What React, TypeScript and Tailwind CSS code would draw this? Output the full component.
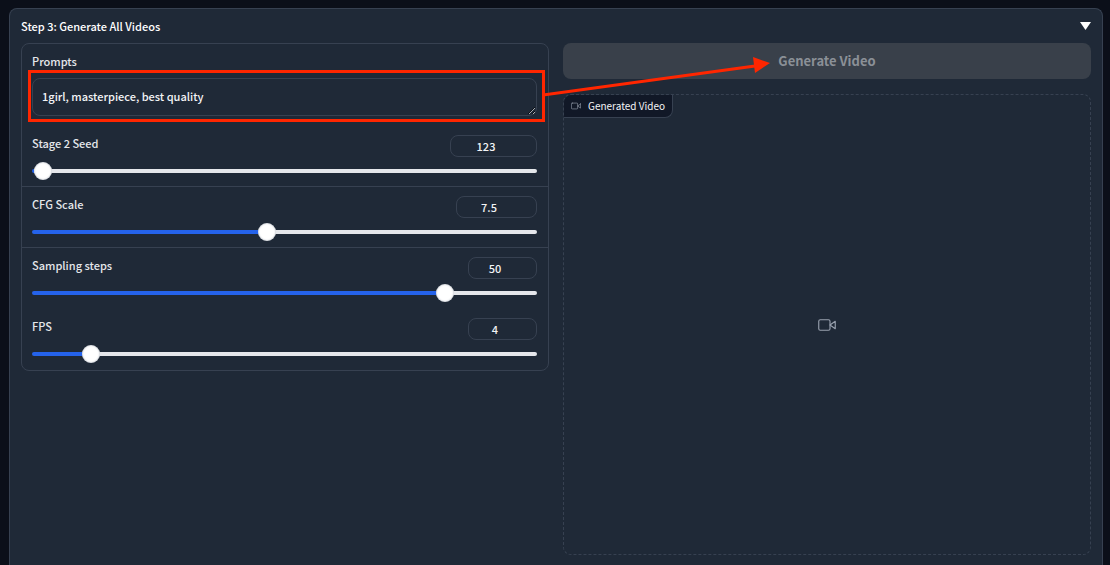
import { useState } from 'react';

type SliderFieldProps = {
  id: string;
  label: string;
  min: number;
  max: number;
  step?: number;
  initial: number;
  inputWidth: string;
  divider?: boolean;
};

function VideoIcon({ className }: { className: string }) {
  return (
    <svg
      viewBox="0 0 24 24"
      fill="none"
      stroke="currentColor"
      strokeWidth="1.5"
      strokeLinecap="round"
      strokeLinejoin="round"
      className={className}
      aria-hidden="true"
    >
      <polygon points="23 7 16 12 23 17 23 7" />
      <rect x="1" y="5" width="15" height="14" rx="2" ry="2" />
    </svg>
  );
}

function SliderField({ id, label, min, max, step = 1, initial, inputWidth, divider }: SliderFieldProps) {
  const [value, setValue] = useState(initial);
  const percent = ((value - min) / (max - min)) * 100;

  return (
    <div className={`h-[61px] pt-[9px] pr-[11px] pl-2.5 ${divider ? 'border-b border-[#374151]' : ''}`}>
      <div className="flex items-start justify-between">
        <label htmlFor={id} className="leading-4 text-gray-200">{label}</label>
        <input
          id={id}
          type="number"
          min={min}
          max={max}
          step={step}
          value={value}
          onChange={(e) => setValue(Number(e.target.value))}
          className={`h-[22px] rounded-lg border border-[#374151] bg-transparent text-center text-gray-100 outline-none ${inputWidth}`}
        />
      </div>
      <input
        type="range"
        aria-label={`${label} slider`}
        min={min}
        max={max}
        step={step}
        value={value}
        onChange={(e) => setValue(Number(e.target.value))}
        style={{ backgroundImage: `linear-gradient(to right, #2563eb ${percent}%, #e5e7eb ${percent}%)` }}
        className="mt-3 block h-1 w-full cursor-pointer appearance-none rounded-full outline-none [&::-webkit-slider-thumb]:size-[18px] [&::-webkit-slider-thumb]:appearance-none [&::-webkit-slider-thumb]:rounded-full [&::-webkit-slider-thumb]:bg-white [&::-webkit-slider-thumb]:shadow-[inset_0_0_2px_#9ca3af]"
      />
    </div>
  );
}

function PromptField() {
  const [prompt, setPrompt] = useState('1girl, masterpiece, best quality');

  return (
    <div className="pt-[9px] pr-[11px] pb-2.5 pl-2.5">
      <label htmlFor="prompt" className="block leading-4 text-gray-200">Prompts</label>
      <div className="relative mt-[9px]">
        <textarea
          id="prompt"
          rows={1}
          value={prompt}
          onChange={(e) => setPrompt(e.target.value)}
          className="block h-[38px] w-full resize-y overflow-hidden rounded-lg border border-[#374151] bg-transparent px-[9px] py-[9px] leading-4 text-gray-100 outline-none"
        />
        {/* Highlight frame and arrow pointing at the generate button */}
        <div className="pointer-events-none absolute -top-2 -right-2 -bottom-1.5 -left-1 border-3 border-[#ff2600]" />
        <svg
          viewBox="0 0 232 48"
          className="pointer-events-none absolute -top-6 left-full z-10 ml-1.5 h-12 w-[232px]"
          aria-hidden="true"
        >
          <line x1="0" y1="41" x2="212" y2="12" stroke="#ff2600" strokeWidth="3" />
          <polygon points="210,3 227,9 212,19" fill="#ff2600" />
        </svg>
      </div>
    </div>
  );
}

export default function App() {
  const [open, setOpen] = useState(true);

  return (
    <main className="flex min-h-screen bg-[#0b0f19] pt-2 pr-[7px] pl-[9px] font-['Noto_Sans_CJK_SC',sans-serif] text-[11px] font-medium">
      <section className="flex flex-1 flex-col rounded-t-lg border border-b-0 border-[#374151] bg-[#1f2937] px-[11px] pb-2.5">
        <button
          type="button"
          aria-expanded={open}
          onClick={() => setOpen(!open)}
          className="flex h-[34px] w-full items-center justify-between text-white"
        >
          <span>Step 3: Generate All Videos</span>
          <svg viewBox="0 0 11 8" className={`h-2 w-[11px] ${open ? '' : 'rotate-90'}`} fill="currentColor" aria-hidden="true">
            <polygon points="0,0 11,0 5.5,8" />
          </svg>
        </button>

        {open && (
          <div className="grid flex-1 grid-cols-2 gap-3.5">
            <div className="self-start rounded-lg border border-[#374151]">
              <PromptField />
              <SliderField id="seed" label="Stage 2 Seed" min={-1} max={32768} initial={123} inputWidth="w-[87px]" divider />
              <SliderField id="cfg" label="CFG Scale" min={1} max={15} step={0.1} initial={7.5} inputWidth="w-[81px]" divider />
              <SliderField id="steps" label="Sampling steps" min={1} max={60} initial={50} inputWidth="w-[69px]" />
              <SliderField id="fps" label="FPS" min={1} max={30} initial={4} inputWidth="w-[69px]" />
            </div>

            <div className="flex flex-col gap-[15px]">
              <button type="button" disabled className="h-9 rounded-lg bg-[#39404a] text-[13px] font-bold text-[#8b9097]">
                Generate Video
              </button>
              <div className="relative flex flex-1 items-center justify-center rounded-lg border border-dashed border-[#374151] text-gray-400">
                <div className="absolute top-0 left-0 flex h-[23px] items-center gap-[7px] rounded-tl-lg rounded-br-lg border-r border-b border-[#374151] bg-[#111827] px-[7px] text-[10px] leading-4 font-normal text-gray-100">
                  <VideoIcon className="size-2.5 text-gray-400" />
                  <span>Generated Video</span>
                </div>
                <VideoIcon className="size-[18px]" />
              </div>
            </div>
          </div>
        )}
      </section>
    </main>
  );
}
